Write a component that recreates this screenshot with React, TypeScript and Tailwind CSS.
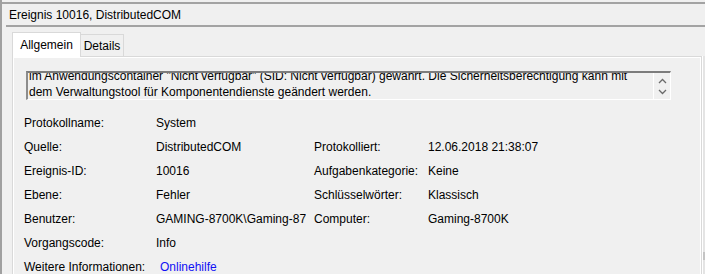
import React from "react";

type Row = {
  label: string;
  value: React.ReactNode;
  label2?: string;
  value2?: string;
};

const rows: Row[] = [
  { label: "Protokollname:", value: "System" },
  { label: "Quelle:", value: "DistributedCOM", label2: "Protokolliert:", value2: "12.06.2018 21:38:07" },
  { label: "Ereignis-ID:", value: "10016", label2: "Aufgabenkategorie:", value2: "Keine" },
  { label: "Ebene:", value: "Fehler", label2: "Schlüsselwörter:", value2: "Klassisch" },
  { label: "Benutzer:", value: "GAMING-8700K\\Gaming-8700K", label2: "Computer:", value2: "Gaming-8700K" },
  { label: "Vorgangscode:", value: "Info" },
  {
    label: "Weitere Informationen:",
    value: <span className="pl-[4px] text-[#1010f5]">Onlinehilfe</span>,
  },
];

const Chevron = ({ up }: { up?: boolean }) => (
  <svg width="9" height="6" viewBox="0 0 9 6" className="block">
    <path
      d={up ? "M1 5 L4.5 1.5 L8 5" : "M1 1 L4.5 4.5 L8 1"}
      fill="none"
      stroke="#6a6a6a"
      strokeWidth="1.3"
    />
  </svg>
);

export default function App() {
  return (
    <div
      className="w-[705px] h-[274px] overflow-hidden bg-[#f0f0f0] border-l-2 border-[#a0a0a0] text-[12px] text-black"
      style={{ fontFamily: '"Liberation Sans", Arial, sans-serif' }}
    >
      <div className="pt-[2px]">
        <div className="h-[2px] bg-[#a3a3a3]" />
      </div>

      {/* title */}
      <div className="pt-[4px] pl-[7px] leading-[15px] h-[19px]">Ereignis 10016, DistributedCOM</div>
      <div className="mt-[2px] ml-[4px] h-[2px] bg-[#a3a3a3]" />

      {/* tabs */}
      <div className="mt-[5px] ml-[10px] flex items-end">
        <div className="relative z-10 h-[25px] w-[69px] bg-white border border-b-0 border-[#d9d9d9] flex items-center justify-center leading-[15px] pt-[1px]">
          Allgemein
        </div>
        <div className="h-[23px] w-[43px] border border-l-0 border-b-0 border-[#d9d9d9] flex items-center justify-center leading-[15px]">
          Details
        </div>
      </div>

      <div className="flex">
        <div className="-mt-px ml-[10px] w-[690px] h-[230px] border border-[#d9d9d9] bg-white p-px">
          <div className="h-full bg-[#f0f0f0] pt-[13px] pl-[10px]">
            {/* description box */}
            <div className="ml-[2px] w-[645px] h-[29px] flex border-t-2 border-l-2 border-t-[#7c7c7c] border-l-[#8c8c8c] border-b border-r border-b-white border-r-white">
              <div className="flex-1 overflow-hidden pl-[1px]">
                <div className="-mt-[5px] leading-[16px] whitespace-nowrap">
                  <div>
                    im Anwendungscontainer "Nicht verfügbar" (SID: Nicht verfügbar) gewährt. Die Sicherheitsberechtigung kann mit
                  </div>
                  <div>dem Verwaltungstool für Komponentendienste geändert werden.</div>
                </div>
              </div>
              <div className="w-[17px] border-l border-white flex flex-col items-center pt-[5px] gap-[5px]">
                <Chevron up />
                <Chevron />
              </div>
            </div>

            {/* fields */}
            <div className="mt-[11px]">
              {rows.map((r) => (
                <div key={r.label} className="flex h-[24px] items-center leading-[15px] whitespace-nowrap">
                  <div className="w-[132px]">{r.label}</div>
                  <div className="w-[150px] overflow-hidden">{r.value}</div>
                  {r.label2 && (
                    <>
                      <div className="ml-[8px] w-[114px]">{r.label2}</div>
                      <div>{r.value2}</div>
                    </>
                  )}
                </div>
              ))}
            </div>
          </div>
        </div>
        <div className="-mt-px w-[3px] border-l border-white bg-[#e4e4e4] flex flex-col justify-end">
          <div className="h-[8px] bg-[#c4c4c4] mb-[26px]" />
        </div>
      </div>
    </div>
  );
}
